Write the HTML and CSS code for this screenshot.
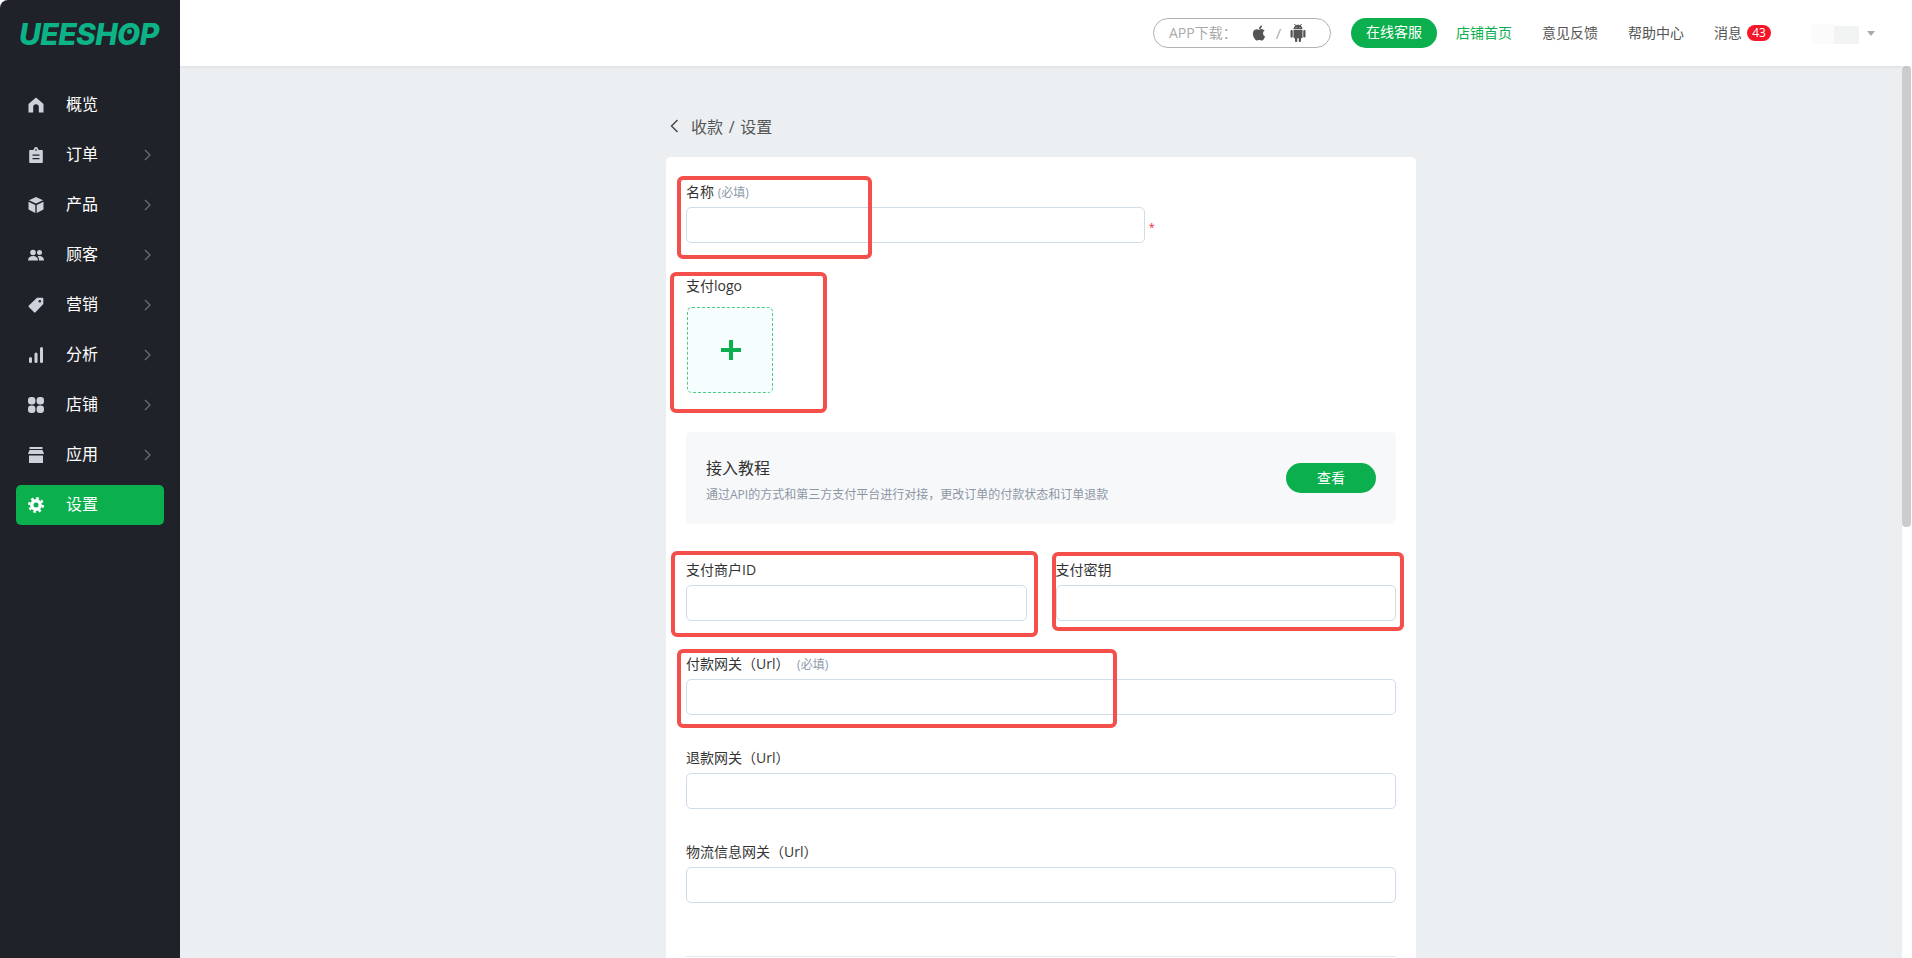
FILE: index.html
```html
<!DOCTYPE html>
<html lang="zh-CN">
<head>
    <meta charset="UTF-8">
    <meta name="viewport" content="width=device-width, initial-scale=1.0">
    <title>收款设置 - UEESHOP</title>
    <link rel="stylesheet" href="styles.css">
</head>
<body>
    <div class="app">
        <aside class="sidebar">
            <div class="logo">UEESH<span class="logo-o">O</span>P</div>
            <nav class="menu">
                <a class="menu-item">
                    <svg class="menu-icon" viewBox="0 0 16 16"><path d="M8 .5 15.5 7v8.5h-4.7V10a2.8 2.8 0 0 0-5.6 0v5.5H.5V7z"/></svg>
                    <span>概览</span>
                </a>
                <a class="menu-item">
                    <svg class="menu-icon" viewBox="0 0 16 16"><path fill-rule="evenodd" d="M5.5 2H6a2 2 0 0 1 4 0h.5v1H14a.8.8 0 0 1 .8.8v11.4a.8.8 0 0 1-.8.8H2a.8.8 0 0 1-.8-.8V3.800A.8.8 0 0 1 2 3h3.500zM7.300 2.300h1.400v1.400H7.300zM4.500 7.500v1.300h7V7.500zm0 3.500v1.300h7V11z"/></svg>
                    <span>订单</span>
                    <svg class="menu-arrow" viewBox="0 0 7 12"><path d="M1 1l5 5-5 5"/></svg>
                </a>
                <a class="menu-item">
                    <svg class="menu-icon" viewBox="0 0 16 16"><path d="M8 0l7 3.300L8 6.600 1 3.300zM.5 4.800l6.800 3.200V16L.5 12.600zM15.500 4.800 8.700 8V16l6.800-3.400z"/></svg>
                    <span>产品</span>
                    <svg class="menu-arrow" viewBox="0 0 7 12"><path d="M1 1l5 5-5 5"/></svg>
                </a>
                <a class="menu-item">
                    <svg class="menu-icon" viewBox="0 0 16 16"><circle cx="5" cy="5.500" r="2.800"/><circle cx="11.500" cy="5.500" r="2.500"/><path d="M0 13.500c0-3 2-4.500 5-4.500s5 1.500 5 4.500zM11 13.500c0-1.800-.5-3.200-1.500-4.200.6-.2 1.300-.3 2-.3 2.600 0 4.500 1.500 4.500 4.500z"/></svg>
                    <span>顾客</span>
                    <svg class="menu-arrow" viewBox="0 0 7 12"><path d="M1 1l5 5-5 5"/></svg>
                </a>
                <a class="menu-item">
                    <svg class="menu-icon" viewBox="0 0 16 16"><path fill-rule="evenodd" d="M9 .8h5.500a.8.8 0 0 1 .8.8V7L7.500 15.300a1 1 0 0 1-1.400 0L.8 10a1 1 0 0 1 0-1.400zM11.800 3a1.300 1.300 0 1 0 0 2.600 1.300 1.300 0 0 0 0-2.600z"/></svg>
                    <span>营销</span>
                    <svg class="menu-arrow" viewBox="0 0 7 12"><path d="M1 1l5 5-5 5"/></svg>
                </a>
                <a class="menu-item">
                    <svg class="menu-icon" viewBox="0 0 16 16"><rect x="1" y="10" width="3" height="6" rx="1.500"/><rect x="6.500" y="5.500" width="3" height="10.500" rx="1.500"/><rect x="12" y="0" width="3" height="16" rx="1.500"/></svg>
                    <span>分析</span>
                    <svg class="menu-arrow" viewBox="0 0 7 12"><path d="M1 1l5 5-5 5"/></svg>
                </a>
                <a class="menu-item">
                    <svg class="menu-icon" viewBox="0 0 16 16"><rect x="0" y="0" width="7.400" height="7.400" rx="3.200"/><rect x="8.600" y="0" width="7.400" height="7.400" rx="3.200"/><rect x="0" y="8.600" width="7.400" height="7.400" rx="3.200"/><rect x="8.600" y="8.600" width="7.400" height="7.400" rx="3.200"/></svg>
                    <span>店铺</span>
                    <svg class="menu-arrow" viewBox="0 0 7 12"><path d="M1 1l5 5-5 5"/></svg>
                </a>
                <a class="menu-item">
                    <svg class="menu-icon" viewBox="0 0 16 16"><rect x="1.500" y="0" width="13" height="2"/><path d="M1.500 3h13L16 7H0zM1 8.500h14V16H1z"/></svg>
                    <span>应用</span>
                    <svg class="menu-arrow" viewBox="0 0 7 12"><path d="M1 1l5 5-5 5"/></svg>
                </a>
                <a class="menu-item active">
                    <svg class="menu-icon gear" viewBox="0 0 16 16"><circle cx="8" cy="8" r="4.200"/><circle class="gear-teeth" cx="8" cy="8" r="6.800"/></svg>
                    <span>设置</span>
                </a>
            </nav>
        </aside>

        <div class="right">
            <header class="topbar">
                <div class="app-pill">
                    <span class="app-label">APP下载：</span>
                    <svg class="os-icon" viewBox="0 0 24 24"><path d="M18.710 19.500c-.83 1.240-1.710 2.450-3.050 2.470-1.340.03-1.770-.79-3.290-.79-1.530 0-2 .77-3.270.82-1.310.05-2.300-1.320-3.140-2.530C4.250 17 2.940 12.450 4.700 9.390c.87-1.520 2.430-2.480 4.120-2.510 1.280-.02 2.500.87 3.290.87.780 0 2.260-1.070 3.810-.91.650.03 2.470.26 3.640 1.980-.09.06-2.170 1.280-2.150 3.810.03 3.020 2.650 4.030 2.680 4.040-.03.07-.42 1.440-1.380 2.830M13 3.500c.73-.83 1.940-1.460 2.940-1.500.13 1.170-.34 2.350-1.040 3.190-.69.85-1.830 1.510-2.950 1.420-.15-1.150.41-2.350 1.050-3.110z"/></svg>
                    <span class="app-slash">/</span>
                    <svg class="os-icon" viewBox="0 0 24 24"><path d="M6 18c0 .55.45 1 1 1h1v3.500c0 .83.67 1.500 1.500 1.500s1.500-.67 1.500-1.500V19h2v3.500c0 .83.67 1.500 1.500 1.500s1.500-.67 1.500-1.500V19h1c.55 0 1-.45 1-1V8H6v10zM3.500 8C2.670 8 2 8.670 2 9.500v7c0 .83.67 1.500 1.500 1.500S5 17.330 5 16.500v-7C5 8.670 4.330 8 3.500 8zm17 0c-.83 0-1.500.67-1.500 1.500v7c0 .83.67 1.500 1.500 1.500s1.500-.67 1.500-1.500v-7c0-.83-.67-1.500-1.500-1.500zm-4.970-5.840l1.300-1.300c.2-.2.2-.51 0-.71-.2-.2-.51-.2-.71 0l-1.480 1.480C13.850 1.230 12.950 1 12 1c-.96 0-1.860.23-2.660.63L7.850.15c-.2-.2-.51-.2-.71 0-.2.2-.2.51 0 .71l1.310 1.310C6.970 3.260 6 5.010 6 7h12c0-1.990-.97-3.750-2.470-4.840zM10 5H9V4h1v1zm5 0h-1V4h1v1z"/></svg>
                </div>
                <a class="online-btn">在线客服</a>
                <a class="top-link shop-link">店铺首页</a>
                <a class="top-link">意见反馈</a>
                <a class="top-link">帮助中心</a>
                <a class="top-link msg-link"><span class="msg-text">消息</span><span class="badge">43</span></a>
                <div class="avatar"><span class="avatar-a"></span><span class="avatar-b"></span></div>
                <span class="caret"></span>
            </header>

            <div class="body-row">
                <main class="main">
                    <div class="crumb">
                        <svg class="crumb-back" viewBox="0 0 9 14"><path d="M7.500 1 1.500 7l6 6"/></svg>
                        <span>收款 / 设置</span>
                    </div>

                    <section class="card">
                        <div class="form-group">
                            <label>名称 <em>(必填)</em></label>
                            <div class="name-row">
                                <input type="text" class="name-input">
                                <span class="star">*</span>
                            </div>
                        </div>

                        <div class="form-group logo-group">
                            <label>支付logo</label>
                            <div class="upload"><span class="plus"></span></div>
                        </div>

                        <div class="tutorial">
                            <div class="tutorial-text">
                                <h3>接入教程</h3>
                                <p>通过API的方式和第三方支付平台进行对接，更改订单的付款状态和订单退款</p>
                            </div>
                            <a class="view-btn">查看</a>
                        </div>

                        <div class="two-cols">
                            <div class="form-group">
                                <label>支付商户ID</label>
                                <input type="text">
                            </div>
                            <div class="form-group">
                                <label>支付密钥</label>
                                <input type="text">
                            </div>
                        </div>

                        <div class="form-group">
                            <label>付款网关（Url） <em class="em-gap">(必填)</em></label>
                            <input type="text">
                        </div>
                        <div class="form-group">
                            <label>退款网关（Url）</label>
                            <input type="text">
                        </div>
                        <div class="form-group">
                            <label>物流信息网关（Url）</label>
                            <input type="text">
                        </div>
                        <hr class="divider">

                        <!-- red marks drawn over the form -->
                        <div class="mark mark-name"></div>
                        <div class="mark mark-logo"></div>
                        <div class="mark mark-merchant"></div>
                        <div class="mark mark-secret"></div>
                        <div class="mark mark-gateway"></div>
                    </section>
                </main>
                <div class="scroll-track"><div class="scroll-thumb"></div></div>
            </div>
        </div>
    </div>
</body>
</html>
```

FILE: styles.css
```css
* {
    box-sizing: border-box;
}
html, body {
    height: 100%;
}
body {
    margin: 0;
    background: #fff;
    color: #333;
    font-family: 'Open Sans', 'Noto Sans CJK SC', sans-serif;
    font-size: 14px;
    overflow: hidden;
}
.app {
    display: flex;
    height: 958px;
}

/* sidebar */
.sidebar {
    width: 180px;
    flex-shrink: 0;
    background: #1f2228;
    border-top-left-radius: 8px;
    padding-top: 18px;
}
.logo {
    height: 32px;
    line-height: 32px;
    padding-left: 19px;
    color: #0cb386;
    font-family: 'Inter', sans-serif;
    font-size: 30px;
    font-weight: 800;
    font-style: italic;
    letter-spacing: -0.6px;
    white-space: nowrap;
}
.logo-o {
    position: relative;
}
.logo-o::after {
    content: "";
    position: absolute;
    left: 10px;
    top: 13px;
    width: 5px;
    height: 5px;
    border-radius: 50%;
    background: #0cb386;
}
.menu {
    margin-top: 35px;
    padding: 0 16px;
}
.menu-item {
    display: flex;
    align-items: center;
    height: 40px;
    margin-bottom: 10px;
    padding: 0 13px 0 12px;
    border-radius: 5px;
    color: #fff;
    font-size: 16px;
}
.menu-item span {
    padding-bottom: 4px;
}
.menu-icon {
    width: 16px;
    height: 16px;
    margin-right: 22px;
    fill: #cdd2da;
}
.menu-arrow {
    width: 7px;
    height: 12px;
    margin-left: auto;
    fill: none;
    stroke: #6a6e74;
    stroke-width: 1.3;
}
.menu-item.active {
    background: #0baf4d;
}
.gear circle {
    fill: none;
    stroke: #fff;
    stroke-width: 3.4;
}
.gear .gear-teeth {
    stroke-width: 2.4;
    stroke-dasharray: 2.67 2.67;
}

/* top bar */
.right {
    flex: 1;
    min-width: 0;
    display: flex;
    flex-direction: column;
}
.topbar {
    height: 66px;
    flex-shrink: 0;
    display: flex;
    align-items: center;
    padding-left: 973px;
    background: #fff;
    box-shadow: 0 1px 3px rgba(0, 0, 0, 0.08);
    position: relative;
}
.app-pill {
    width: 178px;
    height: 30px;
    flex-shrink: 0;
    display: flex;
    align-items: center;
    padding-left: 15px;
    border: 1px solid #aeb2b6;
    border-radius: 15px;
    color: #aaa;
}
.app-label {
    width: 81px;
    padding-bottom: 2px;
    white-space: nowrap;
}
.os-icon {
    width: 18px;
    height: 18px;
    fill: #555;
}
.app-slash {
    width: 21px;
    text-align: center;
    font-size: 15px;
}
.online-btn {
    width: 86px;
    height: 30px;
    flex-shrink: 0;
    margin-left: 20px;
    border-radius: 15px;
    background: #0baf4d;
    color: #fff;
    line-height: 28px;
    text-align: center;
}
.top-link {
    margin-left: 30px;
    padding-bottom: 2px;
    color: #555;
    white-space: nowrap;
}
.shop-link {
    margin-left: 19px;
    color: #0baf4d;
}
.msg-link {
    display: flex;
    align-items: center;
    padding-bottom: 0;
}
.msg-text {
    padding-bottom: 2px;
}
.badge {
    height: 16px;
    min-width: 24px;
    margin-left: 5px;
    border-radius: 8px;
    background: #f5162b;
    color: #fff;
    font-size: 12px;
    line-height: 16px;
    text-align: center;
}
.avatar {
    display: flex;
    align-items: flex-end;
    width: 48px;
    height: 22px;
    margin-left: 40px;
}
.avatar-a {
    width: 23px;
    height: 20px;
    background: #fbfbfb;
}
.avatar-b {
    width: 25px;
    height: 18px;
    background: #f2f3f3;
}
.caret {
    width: 0;
    height: 0;
    margin-left: 8px;
    border-left: 4px solid transparent;
    border-right: 4px solid transparent;
    border-top: 5px solid #aaa;
}

/* main column */
.body-row {
    flex: 1;
    min-height: 0;
    display: flex;
}
.main {
    flex: 1;
    min-width: 0;
    overflow: hidden;
    padding: 49px 0 0 486px;
    background: #ebeff2;
}
.scroll-track {
    width: 10px;
    flex-shrink: 0;
    background: #fff;
}
.scroll-thumb {
    width: 9px;
    height: 461px;
    border-radius: 4px;
    background: #ccc;
}
.crumb {
    display: flex;
    align-items: center;
    height: 24px;
    margin-bottom: 18px;
    padding: 0 0 2px 4px;
    color: #555;
    font-size: 16px;
    word-spacing: 1.5px;
}
.crumb-back {
    width: 9px;
    height: 14px;
    margin-right: 12px;
    fill: none;
    stroke: #444;
    stroke-width: 1.4;
}

/* form card */
.card {
    position: relative;
    width: 750px;
    min-height: 900px;
    padding: 25px 20px 0;
    border-radius: 5px;
    background: #fff;
}
.form-group {
    margin-bottom: 33px;
}
.form-group label {
    display: block;
    height: 20px;
    margin-bottom: 5px;
    color: #333;
    line-height: 20px;
    white-space: nowrap;
}
.form-group em {
    color: #8c9bab;
    font-size: 12px;
    font-style: normal;
}
.form-group .em-gap {
    margin-left: 4px;
}
.form-group input {
    display: block;
    width: 100%;
    height: 36px;
    border: 1px solid #cfdcea;
    border-radius: 5px;
    background: #fff;
    outline: none;
}
.name-row {
    display: flex;
    align-items: flex-start;
}
.form-group .name-input {
    width: 459px;
}
.star {
    margin: 12px 0 0 4px;
    color: #f5162b;
    font-size: 10px;
    line-height: 16px;
}
.logo-group {
    margin-bottom: 39px;
}
.logo-group label {
    margin-bottom: 11px;
}
.upload {
    display: flex;
    align-items: center;
    justify-content: center;
    width: 86px;
    height: 86px;
    margin-left: 1px;
    border: 1px dashed #4bcb85;
    border-radius: 5px;
    background: #f5fdff;
}
.plus {
    position: relative;
    width: 20px;
    height: 4px;
    margin-left: 2px;
    background: #0baf4d;
}
.plus::after {
    content: "";
    position: absolute;
    left: 8px;
    top: -8px;
    width: 4px;
    height: 20px;
    background: #0baf4d;
}
.tutorial {
    display: flex;
    align-items: center;
    justify-content: space-between;
    height: 92px;
    margin-bottom: 36px;
    padding: 0 20px;
    border-radius: 5px;
    background: #f7f8fa;
}
.tutorial-text {
    padding-top: 4px;
}
.tutorial h3 {
    margin: 0 0 6px;
    color: #333;
    font-size: 16px;
    font-weight: 400;
    line-height: 24px;
}
.tutorial p {
    margin: 0;
    color: #8c96a3;
    font-size: 12px;
    line-height: 18px;
}
.view-btn {
    width: 90px;
    height: 30px;
    border-radius: 15px;
    background: #0baf4d;
    color: #fff;
    line-height: 30px;
    text-align: center;
}
.two-cols {
    display: flex;
    gap: 29px;
}
.two-cols .form-group {
    flex: 1;
}
.divider {
    height: 1px;
    margin: 53px 0 0;
    border: 0;
    background: #e6e9ec;
}

/* red marks */
.mark {
    position: absolute;
    border: 4px solid #f44f4a;
    border-radius: 6px;
}
.mark-name {
    left: 11px;
    top: 19px;
    width: 195px;
    height: 83px;
}
.mark-logo {
    left: 4px;
    top: 115px;
    width: 157px;
    height: 141px;
}
.mark-merchant {
    left: 5px;
    top: 394px;
    width: 367px;
    height: 86px;
}
.mark-secret {
    left: 386px;
    top: 395px;
    width: 352px;
    height: 79px;
}
.mark-gateway {
    left: 11px;
    top: 492px;
    width: 440px;
    height: 79px;
}
```
